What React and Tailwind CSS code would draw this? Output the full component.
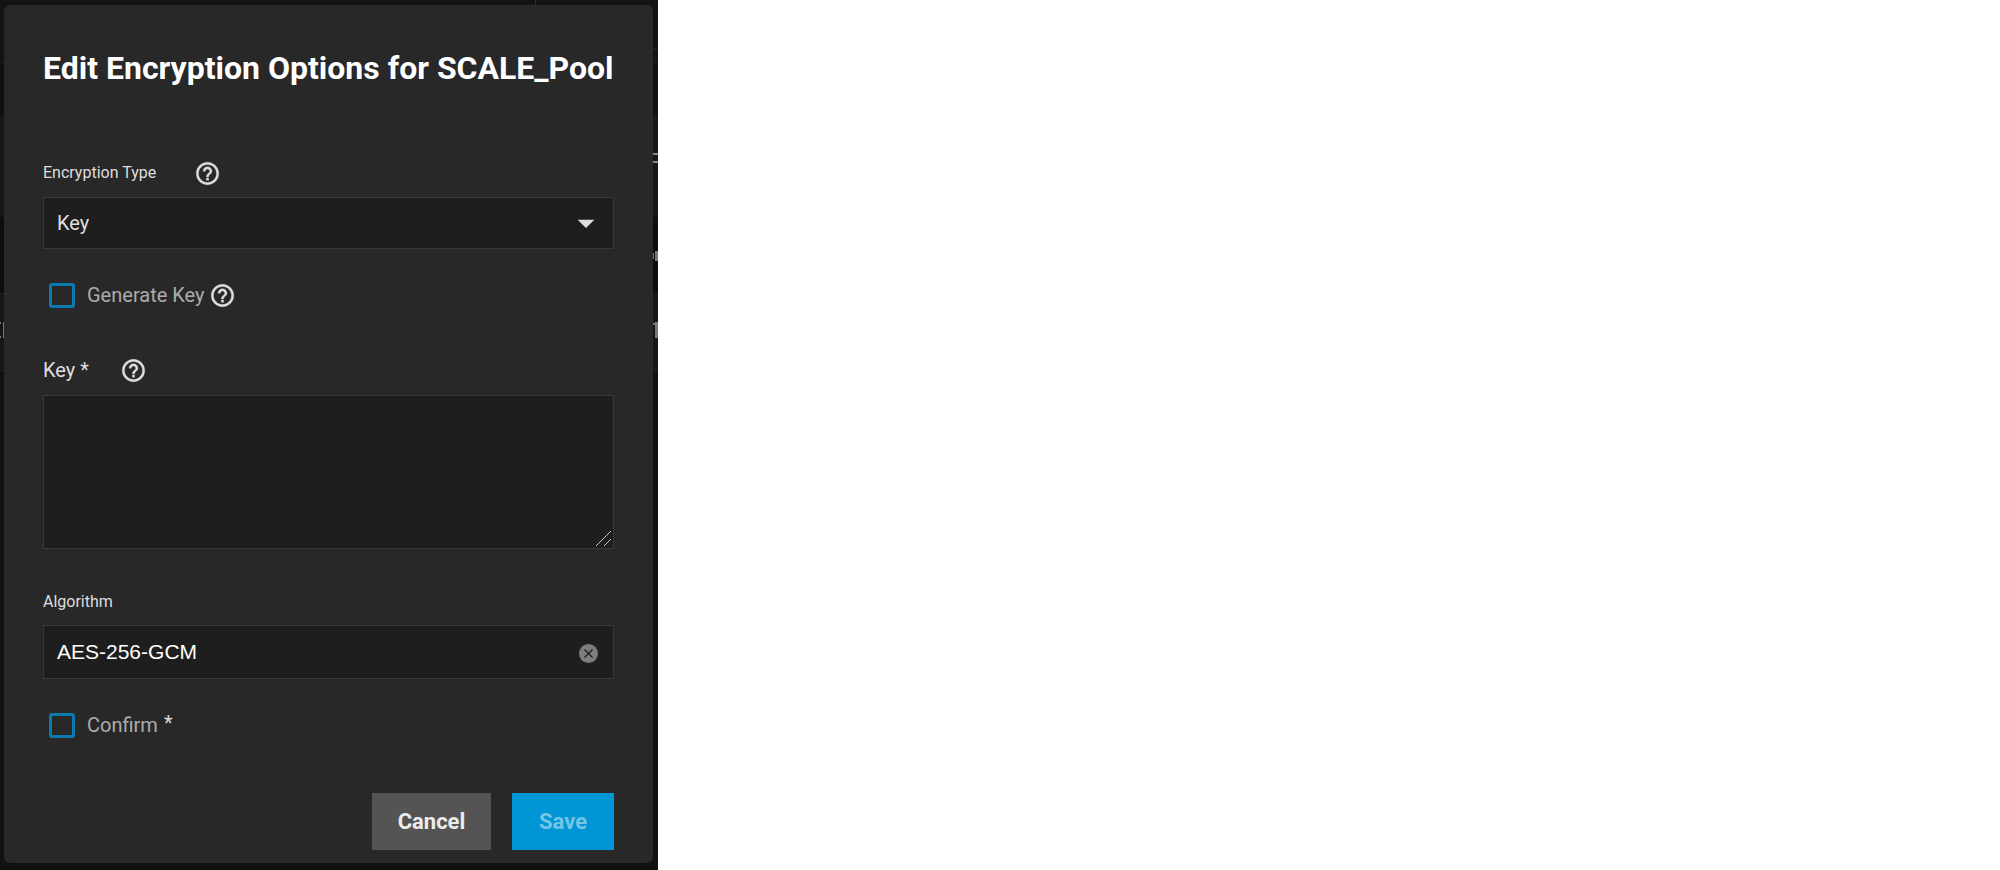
import { MdArrowDropDown } from "react-icons/md";

function Help({ label }) {
  return (
    <button type="button" aria-label={label} className="shrink-0 text-[#dedede]">
      <svg
        viewBox="0 0 24 24"
        fill="currentColor"
        stroke="currentColor"
        strokeWidth="0.3"
        className="size-[27px]"
        aria-hidden="true"
      >
        <path d="M11 18h2v-2h-2v2zm1-16C6.48 2 2 6.48 2 12s4.48 10 10 10 10-4.48 10-10S17.52 2 12 2zm0 18c-4.41 0-8-3.59-8-8s3.59-8 8-8 8 3.59 8 8-3.59 8-8 8zm0-14c-2.21 0-4 1.79-4 4h2c0-1.1.9-2 2-2s2 .9 2 2c0 2-3 1.75-3 5h2c0-2.25 3-2.5 3-5 0-2.21-1.79-4-4-4z" />
      </svg>
    </button>
  );
}

function Check({ id, label, children }) {
  return (
    <div className="flex h-8 items-center pl-1.5">
      <input
        id={id}
        type="checkbox"
        className="h-[25px] w-[26px] appearance-none rounded-[3px] border-3 border-[#0a7bb0] checked:bg-[#0a7bb0]"
      />
      <label htmlFor={id} className="pl-3 text-[20px] leading-6 text-[#acacac]">
        {label}
      </label>
      {children}
    </div>
  );
}

function Page() {
  return (
    <div aria-hidden="true" className="absolute inset-0 flex flex-col bg-[#111111]">
      <div className="flex h-[62px] flex-col items-end bg-[#131313]">
        <span className="mr-[122px] h-[5px] w-px bg-[#2a2a2a]" />
        <span className="mt-[43px] h-px w-1.5 bg-[#222222]" />
      </div>
      <div className="h-[53px] border-t border-[#222222] bg-[#101010]" />
      <div className="flex h-[102px] flex-col items-end gap-1.5 bg-[#171717] pt-[38px]">
        <span className="h-0.5 w-1.5 bg-[#8a8a8a]" />
        <span className="h-0.5 w-1.5 bg-[#8a8a8a]" />
      </div>
      <div className="flex h-[76px] items-start justify-end gap-px bg-[#0d0d0d] pt-[34px]">
        <span className="mt-0.5 h-1.5 w-px bg-[#777777]" />
        <span className="h-[10px] w-[3px] bg-[#777777]" />
      </div>
      <div className="flex h-[78px] items-start border-y border-[#222222] bg-[#171717] pt-7">
        <span className="h-4 w-px border-y-2 border-[#777777]" />
        <span className="ml-0.5 h-4 w-px bg-[#777777]" />
        <span className="mt-px ml-auto h-0.5 w-0.5 bg-[#777777]" />
        <span className="h-4 w-[3px] bg-[#777777]" />
      </div>
    </div>
  );
}

export default function App() {
  return (
    <div className="min-h-screen bg-white font-[Roboto,sans-serif]">
      <main className="relative min-h-screen w-full max-w-[658px] pt-[5px] pr-[5px] pb-[7px] pl-1">
        <Page />
        <form
          role="dialog"
          aria-labelledby="title"
          className="relative rounded-md bg-[#282828] px-[39px] pt-[43px] pb-[13px] text-[#dedede]"
          onSubmit={(e) => e.preventDefault()}
        >
          <h1 id="title" className="text-[32px] leading-10 font-bold whitespace-nowrap text-white">
            Edit Encryption Options for SCALE_Pool
          </h1>

          <div className="mt-[71px] flex h-7 items-center gap-[38px]">
            <label htmlFor="type" className="text-base">Encryption Type</label>
            <Help label="Encryption type help" />
          </div>
          <div className="mt-2.5 grid items-center">
            <select
              id="type"
              className="col-start-1 row-start-1 h-[52px] w-full appearance-none border border-[#383838] bg-[#1e1e1e] px-[13px] text-[20px]"
            >
              <option>Key</option>
              <option>Passphrase</option>
            </select>
            <MdArrowDropDown
              className="pointer-events-none col-start-1 row-start-1 mr-2 size-10 justify-self-end"
              aria-hidden="true"
            />
          </div>

          <div className="mt-[30px]">
            <Check id="generate" label="Generate Key">
              <span className="flex pl-1">
                <Help label="Generate key help" />
              </span>
            </Check>
          </div>

          <div className="mt-[45px] flex h-7 items-center gap-[31px]">
            <label htmlFor="key" className="text-[20px] leading-6">Key *</label>
            <Help label="Key help" />
          </div>
          <div className="relative mt-[11px]">
            <textarea
              id="key"
              className="block h-[154px] w-full resize-y border border-[#383838] bg-[#1e1e1e] p-3.5 text-[20px] [&::-webkit-resizer]:bg-[#1e1e1e]"
            />
            <svg
              viewBox="0 0 16 16"
              className="pointer-events-none absolute right-0.5 bottom-[3px] size-4"
              aria-hidden="true"
            >
              <path d="M0 16L15 1M8 16l7-7" stroke="#c8c8c8" strokeWidth="1" />
            </svg>
          </div>

          <label htmlFor="algorithm" className="mt-[41px] block text-base">Algorithm</label>
          <div className="mt-[11px] flex h-[54px] items-center border border-[#383838] bg-[#1e1e1e] pr-[15px] pl-[13px]">
            <input
              id="algorithm"
              type="text"
              defaultValue="AES-256-GCM"
              className="min-w-0 grow bg-transparent font-['Liberation_Sans',Arial,sans-serif] text-[21px] text-white outline-none"
            />
            <button type="button" aria-label="Clear algorithm" className="pt-0.5">
              <svg viewBox="0 0 19 19" className="size-[19px]" aria-hidden="true">
                <circle cx="9.5" cy="9.5" r="9.5" fill="#7d7d7d" />
                <path d="M5.5 5.5l8 8M13.5 5.5l-8 8" stroke="#242424" strokeWidth="1.5" />
              </svg>
            </button>
          </div>

          <div className="mt-[30px]">
            <Check id="confirm" label="Confirm">
              <span className="pb-1 pl-1.5 text-[20px] leading-6 text-[#dedede]">*</span>
            </Check>
          </div>

          <div className="mt-[52px] flex justify-end gap-[21px] text-[22px] font-bold">
            <button type="button" className="h-[57px] w-[119px] bg-[#545454] text-[#ececec]">Cancel</button>
            <button type="submit" className="h-[57px] w-[102px] bg-[#0095d5] text-[#74c4e8]">Save</button>
          </div>
        </form>
      </main>
    </div>
  );
}
